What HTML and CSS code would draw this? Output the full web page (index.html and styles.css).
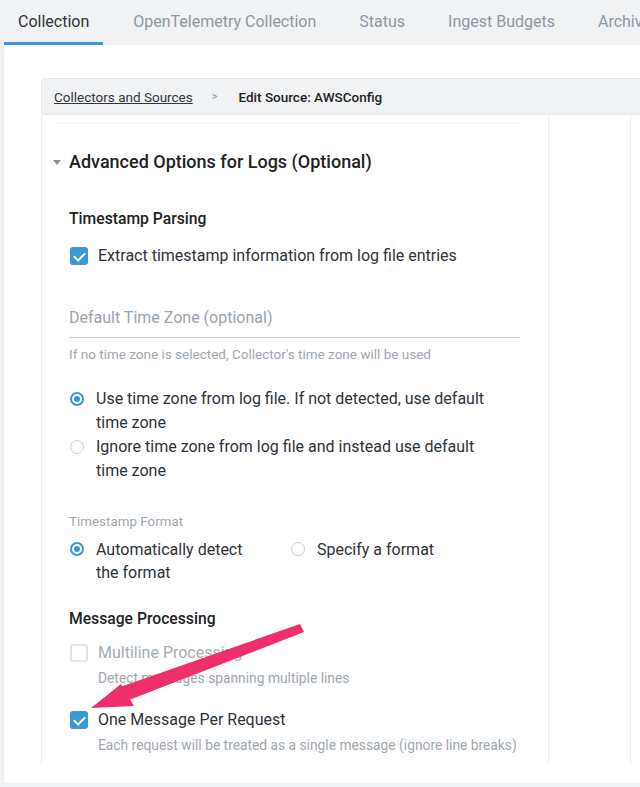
FILE: index.html
```html
<!DOCTYPE html>
<html lang="en">
<head>
    <meta charset="UTF-8">
    <meta name="viewport" content="width=device-width, initial-scale=1.0">
    <link rel="stylesheet" href="styles.css">
    <title>Edit Source: AWSConfig</title>
</head>
<body>

    <nav class="tabs">
        <a class="tab active">Collection</a>
        <a class="tab">OpenTelemetry Collection</a>
        <a class="tab">Status</a>
        <a class="tab">Ingest Budgets</a>
        <a class="tab">Archive</a>
    </nav>

    <main class="panel">
        <div class="breadcrumb">
            <a class="crumb-link">Collectors and Sources</a>
            <span class="crumb-sep">&gt;</span>
            <span class="crumb-current">Edit Source: AWSConfig</span>
        </div>

        <div class="columns">
            <section class="form-col">
                <div class="divider"></div>

                <h2 class="section-title"><span class="caret"></span>Advanced Options for Logs (Optional)</h2>

                <h3 class="group-title">Timestamp Parsing</h3>
                <label class="check-row">
                    <span class="checkbox checked"></span>
                    Extract timestamp information from log file entries
                </label>

                <div class="field">Default Time Zone (optional)</div>
                <div class="hint">If no time zone is selected, Collector's time zone will be used</div>

                <div class="radio-list">
                    <label class="radio-row">
                        <span class="radio on"></span>
                        <span class="radio-text">Use time zone from log file. If not detected, use default time zone</span>
                    </label>
                    <label class="radio-row">
                        <span class="radio"></span>
                        <span class="radio-text">Ignore time zone from log file and instead use default time zone</span>
                    </label>
                </div>

                <div class="small-label">Timestamp Format</div>
                <div class="radio-inline">
                    <label class="radio-row auto">
                        <span class="radio on"></span>
                        <span class="radio-text">Automatically detect the format</span>
                    </label>
                    <label class="radio-row">
                        <span class="radio"></span>
                        <span class="radio-text">Specify a format</span>
                    </label>
                </div>

                <h3 class="group-title msg">Message Processing</h3>
                <div class="option disabled">
                    <label class="check-row">
                        <span class="checkbox"></span>
                        Multiline Processing
                    </label>
                    <div class="desc">Detect messages spanning multiple lines</div>
                </div>
                <div class="option">
                    <label class="check-row">
                        <span class="checkbox checked"></span>
                        One Message Per Request
                    </label>
                    <div class="desc">Each request will be treated as a single message (ignore line breaks)</div>
                </div>
            </section>
            <section class="side-col"></section>
            <section class="side-col wide"></section>
        </div>
    </main>

    <!-- annotation arrow -->
    <svg class="arrow" width="640" height="787" viewBox="0 0 640 787">
        <polygon points="300,624 304,632 129,700 120,687" fill="#ef2f6c"/>
        <polygon points="91,708 121,684 134,706" fill="#ef2f6c"/>
    </svg>

</body>
</html>
```

FILE: styles.css
```css
html {
    overflow: hidden;
}

body {
    margin: 0;
    width: 900px;
    font-family: 'Roboto', 'Liberation Sans', sans-serif;
    background-color: #f1f2f4;
    color: #2f3337;
}

/* Onglets du haut */
.tabs {
    display: flex;
    gap: 43px;
    height: 45px;
    padding-left: 4px;
}

.tab {
    font-size: 16px;
    padding-top: 2px;
    line-height: 40px;
    color: #8c98a4;
    border-bottom: 3px solid transparent;
    white-space: nowrap;
}

.tab.active {
    color: #2f3337;
    padding: 2px 14px 0;
    margin-right: -13px;
    border-bottom-color: #3f98d4;
}

.panel {
    margin-left: 4px;
    background: #fff;
    padding: 33px 0 19px 37px;
    box-shadow: 0 1px 2px rgba(0, 0, 0, 0.08);
}

.breadcrumb {
    height: 37px;
    display: flex;
    align-items: center;
    padding-left: 12px;
    background: #f1f2f4;
    border: 1px solid #e6e8eb;
    border-radius: 3px;
    box-sizing: border-box;
    font-size: 13.5px;
}

.crumb-link {
    color: #33373b;
    text-decoration: underline;
}

.crumb-sep {
    color: #8c98a4;
    font-size: 11px;
    margin: 0 21px 0 19px;
}

.crumb-current {
    font-weight: 500;
    color: #222;
}

.columns {
    display: flex;
}

.form-col {
    width: 504px;
    border-left: 1px solid #eceef0;
    border-right: 1px solid #eceef0;
    padding: 8px 28px 10px 27px;
}

.side-col {
    width: 90px;
    border-right: 1px solid #eceef0;
}

.side-col.wide {
    width: 300px;
}

.divider {
    border-top: 1px solid #f0f1f2;
    margin: 0 0 0 -11px;
}

.section-title {
    position: relative;
    margin: 26px 0 0;
    font-size: 18px;
    line-height: 24px;
    font-weight: 500;
    color: #222;
}

.caret {
    position: absolute;
    left: -16px;
    top: 10px;
    border-left: 4.5px solid transparent;
    border-right: 4.5px solid transparent;
    border-top: 5px solid #8592a0;
}

.group-title {
    margin: 34px 0 0;
    font-size: 15.7px;
    line-height: 22px;
    font-weight: 500;
    color: #222;
}

.group-title.msg {
    margin-top: 24px;
}

.check-row {
    display: flex;
    align-items: center;
    gap: 10px;
    margin-top: 14px;
    font-size: 16px;
    line-height: 24px;
    padding-left: 1px;
}

.checkbox {
    width: 18px;
    height: 18px;
    box-sizing: border-box;
    border: 2px solid #e3e5e8;
    border-radius: 3px;
    position: relative;
    flex: none;
}

.checkbox.checked {
    background: #3a97d8;
    border-color: #3a97d8;
}

.checkbox.checked::after {
    content: "";
    position: absolute;
    left: 4px;
    top: 1px;
    width: 5px;
    height: 9px;
    border: solid #fff;
    border-width: 0 2.5px 2.5px 0;
    transform: rotate(45deg);
}

.field {
    margin-top: 39px;
    font-size: 16px;
    line-height: 22px;
    color: #9aa4ae;
    padding-bottom: 8px;
    border-bottom: 1px solid #cfd4d9;
}

.hint {
    margin-top: 8px;
    font-size: 13.5px;
    line-height: 16px;
    color: #9ea7b0;
}

.radio-list {
    margin-top: 25px;
}

.radio-row {
    display: flex;
    align-items: flex-start;
    gap: 12px;
    font-size: 16px;
    line-height: 24px;
    padding-left: 1px;
}

.radio-text {
    max-width: 405px;
}

.radio {
    width: 14px;
    height: 14px;
    margin-top: 5px;
    box-sizing: border-box;
    border: 1px solid #c9ced4;
    border-radius: 50%;
    flex: none;
    position: relative;
}

.radio.on {
    border: 2px solid #3a97d8;
}

.radio.on::after {
    content: "";
    position: absolute;
    left: 2px;
    top: 2px;
    width: 6px;
    height: 6px;
    border-radius: 50%;
    background: #3a97d8;
}

.small-label {
    margin-top: 31px;
    font-size: 13.4px;
    line-height: 16px;
    color: #9ea7b0;
}

.radio-inline {
    display: flex;
    margin-top: 8px;
}

.radio-inline .radio-row {
    line-height: 23px;
}

.radio-inline .radio {
    margin-top: 4px;
}

.radio-row.auto {
    width: 220px;
}

.radio-row.auto .radio-text {
    max-width: 155px;
}

.option .check-row {
    margin-top: 12px;
    line-height: 22px;
}

.option + .option .check-row {
    margin-top: 22px;
}

.desc {
    margin: 5px 0 0 29px;
    font-size: 13.8px;
    line-height: 18px;
    color: #9ea7b0;
}

.option.disabled .check-row {
    color: #a3acb5;
}

.arrow {
    position: absolute;
    left: 0;
    top: 0;
    pointer-events: none;
}
```
